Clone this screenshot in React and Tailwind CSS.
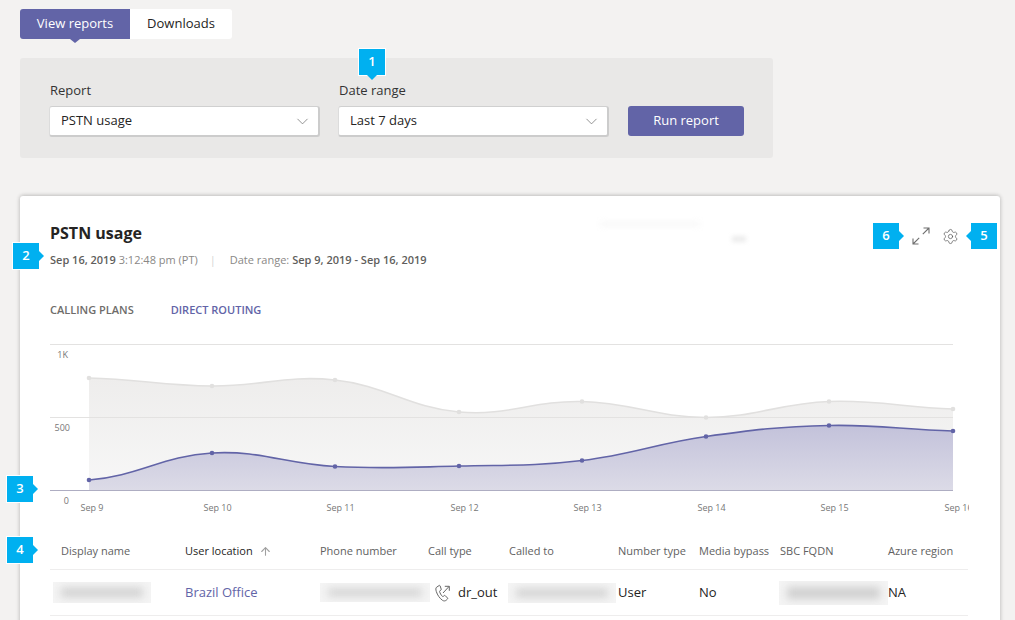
import React from "react";
import { ChevronDown, ArrowUp, Settings } from "lucide-react";

const font = "font-['Open_Sans','Noto_Sans',sans-serif]";

function Badge({ n, side, className }) {
  return (
    <div className={`absolute w-[26px] h-[26px] bg-[#00b0f0] text-white text-[13px] font-semibold flex items-center justify-center outline outline-1 outline-white ${className}`}>
      {n}
      {side === "down" && <span className="absolute left-[8px] top-[26px] w-0 h-0 border-x-[5px] border-x-transparent border-t-[5px] border-t-[#00b0f0]" />}
      {side === "right" && <span className="absolute left-[26px] top-[8px] w-0 h-0 border-y-[5px] border-y-transparent border-l-[5px] border-l-[#00b0f0]" />}
      {side === "left" && <span className="absolute right-[26px] top-[8px] w-0 h-0 border-y-[5px] border-y-transparent border-r-[5px] border-r-[#00b0f0]" />}
    </div>
  );
}

function Select({ label, value }) {
  return (
    <div className="w-[271px] flex flex-col">
      <div className="text-[13px] leading-[18px] text-[#333] mb-[7px] ml-px">{label}</div>
      <div className="h-[31px] bg-white rounded-[3px] border-2 border-t-[#d0d0d0] border-l-[#dcdcdc] border-r-[#cccccc] border-b-[#cccccc] [border-width:1px_2px_2px_1px] flex items-center justify-between pl-[11px] pr-[6px] text-[13px] text-[#252423]">
        <span>{value}</span>
        <ChevronDown size={19} strokeWidth={1} className="text-[#777]" />
      </div>
    </div>
  );
}

const xs = [89, 212, 335, 459, 582, 706, 829, 953];
const gray = [377, 385, 379, 411, 400.5, 416.5, 400.5, 408];
const purple = [479, 452, 465.5, 465, 459.5, 435.5, 424.5, 430];
const ox = 50, oy = 343;

function smooth(ys) {
  let d = `M${xs[0] - ox} ${ys[0] - oy}`;
  for (let i = 1; i < xs.length; i++) {
    const x0 = xs[i - 1] - ox, x1 = xs[i] - ox;
    const y0 = ys[i - 1] - oy, y1 = ys[i] - oy;
    const yp = ys[i - 2] !== undefined ? ys[i - 2] - oy : y0;
    const yn = ys[i + 1] !== undefined ? ys[i + 1] - oy : y1;
    const dx = (x1 - x0) * 0.4;
    const m0 = (y1 - yp) / 2 * 0.4 * (i === 1 ? 0.7 : 1);
    const m1 = (yn - y0) / 2 * 0.4;
    d += ` C${x0 + dx} ${y0 + m0} ${x1 - dx} ${y1 - m1} ${x1} ${y1}`;
  }
  return d;
}

function Chart() {
  const base = 146;
  const close = ` L${xs[7] - ox} ${base} L${xs[0] - ox} ${base} Z`;
  const grayLine = smooth(gray);
  const purpleLine = smooth(purple);
  const labels = ["Sep 9", "Sep 10", "Sep 11", "Sep 12", "Sep 13", "Sep 14", "Sep 15", "Sep 16"];
  return (
    <svg width="920" height="172" viewBox="0 0 920 172" className="block">
      <defs>
        <linearGradient id="g" x1="0" y1="0" x2="0" y2="1">
          <stop offset="0" stopColor="#eeedec" />
          <stop offset="1" stopColor="#f7f7f7" />
        </linearGradient>
        <linearGradient id="p" gradientUnits="userSpaceOnUse" x1="0" y1="80" x2="0" y2="146">
          <stop offset="0" stopColor="#c2c1da" />
          <stop offset="1" stopColor="#dcdbe7" />
        </linearGradient>
      </defs>
      <path d={grayLine + close} fill="url(#g)" />
      <line x1="0" x2="903" y1="0.5" y2="0.5" stroke="#e3e2e1" />
      <line x1="0" x2="903" y1="73.5" y2="73.5" stroke="#e3e2e1" />
      <path d={purpleLine + close} fill="url(#p)" />
      <line x1="0" x2="903" y1="146.5" y2="146.5" stroke="#aeadc2" />
      <path d={grayLine} fill="none" stroke="#e1e0df" strokeWidth="1.6" />
      <path d={purpleLine} fill="none" stroke="#6264a7" strokeWidth="1.6" />
      {xs.map((x, i) => <circle key={i} cx={x - ox} cy={gray[i] - oy} r="2.3" fill="#e1e0df" />)}
      {xs.map((x, i) => <circle key={i} cx={x - ox} cy={purple[i] - oy} r="2.3" fill="#6264a7" />)}
      <g fontSize="9" fill="#777" textAnchor="end">
        <text x="18" y="14">1K</text>
        <text x="20" y="87">500</text>
        <text x="19" y="160">0</text>
      </g>
      <svg x="0" y="0" width="919" height="172">
        <g fontSize="9" fill="#777">
          {labels.map((l, i) => <text key={l} x={xs[i] - ox - 8.5} y="167">{l}</text>)}
        </g>
      </svg>
    </svg>
  );
}

function Blur({ className }) {
  return (
    <div className={`relative overflow-hidden bg-[#f4f4f4] ${className}`}>
      <div className="absolute inset-x-[8px] inset-y-[6px] bg-[#cfcfcf] blur-[4px]" />
    </div>
  );
}

const cols = "grid grid-cols-[135px_135px_108px_81px_109px_81px_81px_108px_80px]";

export default function App() {
  return (
    <div className={`relative h-[620px] overflow-hidden bg-[#f3f2f1] ${font}`}>
      <div className="pl-[20px] pt-[9px]">
        <div className="flex h-[30px] w-[212px] text-[13px]">
          <div className="relative w-[110px] bg-[#6264a7] text-white rounded-l-[3px] flex items-center justify-center">
            View reports
            <span className="absolute left-[50px] top-[30px] w-0 h-0 border-x-[5px] border-x-transparent border-t-[4px] border-t-[#6264a7]" />
          </div>
          <div className="w-[102px] bg-white text-[#252423] rounded-r-[3px] flex items-center justify-center">Downloads</div>
        </div>

        <div className="mt-[19px] w-[753px] h-[100px] bg-[#e9e8e7] rounded-[3px] pl-[29px] pt-[23px] flex items-start">
          <Select label="Report" value="PSTN usage" />
          <div className="w-[18px]" />
          <Select label="Date range" value="Last 7 days" />
          <button className="ml-[19px] mt-[25px] w-[116px] h-[30px] bg-[#6264a7] rounded-[3px] text-white text-[13px]">Run report</button>
        </div>

        <div className="mt-[38px] w-[980px] h-[500px] bg-white rounded-t-[3px] shadow-[0_-1px_4px_rgba(0,0,0,0.12),-1px_0_4px_rgba(0,0,0,0.08),1px_0_4px_rgba(0,0,0,0.08)] pl-[30px] pt-[27px] relative">
          <div className="text-[16px] leading-[20px] font-bold text-[#252423]">PSTN usage</div>
          <div className="mt-[9px] text-[11px] leading-[16px] text-[#8a8886] flex">
            <span className="font-semibold text-[#605e5c]">Sep 16, 2019</span>
            <span className="ml-[3px]">3:12:48 pm (PT)</span>
            <span className="ml-[12px] text-[#d5d4d3]">|</span>
            <span className="ml-[14px]">Date range:</span>
            <span className="ml-[3px] font-semibold text-[#605e5c]">Sep 9, 2019 - Sep 16, 2019</span>
          </div>
          <div className="mt-[34px] flex text-[11px] leading-[16px] font-semibold">
            <span className="text-[#6e6c6a]">CALLING PLANS</span>
            <span className="ml-[37px] text-[#6264a7]">DIRECT ROUTING</span>
          </div>
          <div className="mt-[26px]"><Chart /></div>

          <div className="w-[918px] mt-[18px] text-[11px] text-[#616161]">
            <div className={`${cols} h-[36px] items-center border-b border-[#eeeded]`}>
              <span className="pl-[11px]">Display name</span>
              <span className="text-[#252423] flex items-center gap-[6px]">User location <ArrowUp size={13} strokeWidth={2} className="text-[#a0a0a0]" /></span>
              <span>Phone number</span>
              <span>Call type</span>
              <span>Called to</span>
              <span>Number type</span>
              <span>Media bypass</span>
              <span>SBC FQDN</span>
              <span>Azure region</span>
            </div>
            <div className={`${cols} h-[46px] items-center border-b border-[#eeeded] text-[13px] text-[#252423]`}>
              <Blur className="ml-[3px] w-[98px] h-[21px]" />
              <span className="text-[#6264a7]">Brazil Office</span>
              <Blur className="w-[110px] h-[19px]" />
              <span className="flex items-center ml-[7px]">
                <svg width="16" height="18" viewBox="0 0 16 18" fill="none" stroke="#666" strokeWidth="1" className="mr-[7px]">
                  <path d="M4.2 1.5 1.6 3.2C.6 4 .7 5.5 1.3 7.5 2.4 11 4.6 14.3 7.6 16.4c1.3.8 2.6.6 3.5-.1l1.4-1.3c.3-.3.3-.7 0-1l-2.3-2.4c-.3-.3-.7-.3-1 0l-.9.8c-.3.2-.7.2-1-.1C6 11 5 9.200 4.600 7.600c-.1-.4 0-.7.3-.9l1-.6c.4-.2.5-.6.3-1L5.100 1.800C4.900 1.400 4.500 1.300 4.200 1.500Z" />
                  <path d="M8 9 14 2.500M9.800 2.300H14.300V6.800" />
                </svg>
                dr_out
              </span>
              <Blur className="-ml-px w-[108px] h-[20px]" />
              <span>User</span>
              <span>No</span>
              <Blur className="-ml-px w-[109px] h-[24px]" />
              <span>NA</span>
            </div>
          </div>

          <div className="absolute left-[580px] top-[26px] w-[100px] h-[4px] bg-[#f6f6f6] blur-[3px]" />
          <div className="absolute left-[712px] top-[40px] w-[14px] h-[6px] bg-[#ececec] blur-[2px]" />

          <svg width="18" height="18" viewBox="0 0 18 18" fill="none" stroke="#6e6e6e" strokeWidth="1.1" className="absolute left-[892px] top-[31px]">
            <path d="M1 17 7.200 10.800M1 11.500V17H6.500M17 1 10.800 7.200M11.500 1H17V6.500" />
          </svg>
          <Settings size={17} strokeWidth={1} className="absolute left-[922px] top-[32px] text-[#555]" />
        </div>
      </div>

      <Badge n="1" side="down" className="left-[359px] top-[49px]" />
      <Badge n="2" side="right" className="left-[13px] top-[243px]" />
      <Badge n="3" side="right" className="left-[7px] top-[476px]" />
      <Badge n="4" side="right" className="left-[7px] top-[537px]" />
      <Badge n="5" side="left" className="left-[971px] top-[223px]" />
      <Badge n="6" side="right" className="left-[873px] top-[223px]" />
    </div>
  );
}
